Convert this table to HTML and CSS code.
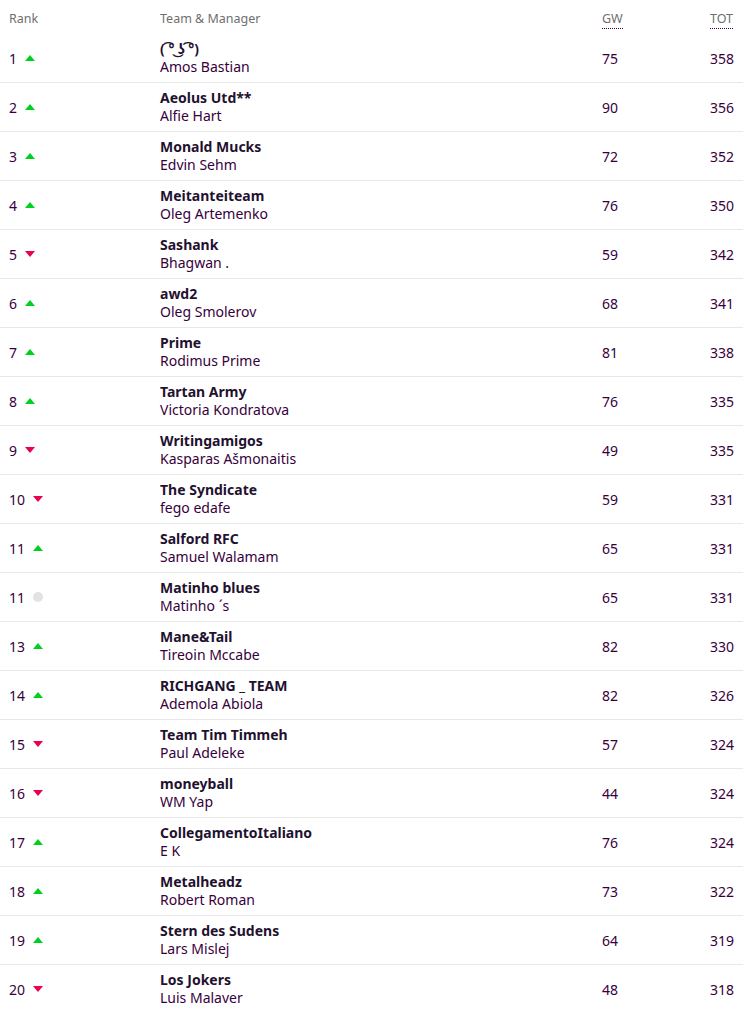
FILE: index.html
```html
<!DOCTYPE html>
<html>
<head>
<meta charset="utf-8">
<link rel="stylesheet" href="styles.css">
</head>
<body>
<div class="table">
  <div class="row head">
    <div class="c-rank">Rank</div>
    <div class="c-team">Team &amp; Manager</div>
    <div class="c-gw"><abbr>GW</abbr></div>
    <div class="c-tot"><abbr>TOT</abbr></div>
  </div>
  <div class="row"><div class="c-rank">1 <span class="up"></span></div><div class="c-team"><div class="tn">( ͡° ͜ʖ ͡°)</div><div class="mn">Amos Bastian</div></div><div class="c-gw">75</div><div class="c-tot">358</div></div>
  <div class="row"><div class="c-rank">2 <span class="up"></span></div><div class="c-team"><div class="tn">Aeolus Utd**</div><div class="mn">Alfie Hart</div></div><div class="c-gw">90</div><div class="c-tot">356</div></div>
  <div class="row"><div class="c-rank">3 <span class="up"></span></div><div class="c-team"><div class="tn">Monald Mucks</div><div class="mn">Edvin Sehm</div></div><div class="c-gw">72</div><div class="c-tot">352</div></div>
  <div class="row"><div class="c-rank">4 <span class="up"></span></div><div class="c-team"><div class="tn">Meitanteiteam</div><div class="mn">Oleg Artemenko</div></div><div class="c-gw">76</div><div class="c-tot">350</div></div>
  <div class="row"><div class="c-rank">5 <span class="down"></span></div><div class="c-team"><div class="tn">Sashank</div><div class="mn">Bhagwan .</div></div><div class="c-gw">59</div><div class="c-tot">342</div></div>
  <div class="row"><div class="c-rank">6 <span class="up"></span></div><div class="c-team"><div class="tn">awd2</div><div class="mn">Oleg Smolerov</div></div><div class="c-gw">68</div><div class="c-tot">341</div></div>
  <div class="row"><div class="c-rank">7 <span class="up"></span></div><div class="c-team"><div class="tn">Prime</div><div class="mn">Rodimus Prime</div></div><div class="c-gw">81</div><div class="c-tot">338</div></div>
  <div class="row"><div class="c-rank">8 <span class="up"></span></div><div class="c-team"><div class="tn">Tartan Army</div><div class="mn">Victoria Kondratova</div></div><div class="c-gw">76</div><div class="c-tot">335</div></div>
  <div class="row"><div class="c-rank">9 <span class="down"></span></div><div class="c-team"><div class="tn">Writingamigos</div><div class="mn">Kasparas Ašmonaitis</div></div><div class="c-gw">49</div><div class="c-tot">335</div></div>
  <div class="row"><div class="c-rank">10 <span class="down"></span></div><div class="c-team"><div class="tn">The Syndicate</div><div class="mn">fego edafe</div></div><div class="c-gw">59</div><div class="c-tot">331</div></div>
  <div class="row"><div class="c-rank">11 <span class="up"></span></div><div class="c-team"><div class="tn">Salford RFC</div><div class="mn">Samuel Walamam</div></div><div class="c-gw">65</div><div class="c-tot">331</div></div>
  <div class="row"><div class="c-rank">11 <span class="same"></span></div><div class="c-team"><div class="tn">Matinho blues</div><div class="mn">Matinho ´s</div></div><div class="c-gw">65</div><div class="c-tot">331</div></div>
  <div class="row"><div class="c-rank">13 <span class="up"></span></div><div class="c-team"><div class="tn">Mane&amp;Tail</div><div class="mn">Tireoin Mccabe</div></div><div class="c-gw">82</div><div class="c-tot">330</div></div>
  <div class="row"><div class="c-rank">14 <span class="up"></span></div><div class="c-team"><div class="tn">RICHGANG _ TEAM</div><div class="mn">Ademola Abiola</div></div><div class="c-gw">82</div><div class="c-tot">326</div></div>
  <div class="row"><div class="c-rank">15 <span class="down"></span></div><div class="c-team"><div class="tn">Team Tim Timmeh</div><div class="mn">Paul Adeleke</div></div><div class="c-gw">57</div><div class="c-tot">324</div></div>
  <div class="row"><div class="c-rank">16 <span class="down"></span></div><div class="c-team"><div class="tn">moneyball</div><div class="mn">WM Yap</div></div><div class="c-gw">44</div><div class="c-tot">324</div></div>
  <div class="row"><div class="c-rank">17 <span class="up"></span></div><div class="c-team"><div class="tn">CollegamentoItaliano</div><div class="mn">E K</div></div><div class="c-gw">76</div><div class="c-tot">324</div></div>
  <div class="row"><div class="c-rank">18 <span class="up"></span></div><div class="c-team"><div class="tn">Metalheadz</div><div class="mn">Robert Roman</div></div><div class="c-gw">73</div><div class="c-tot">322</div></div>
  <div class="row"><div class="c-rank">19 <span class="up"></span></div><div class="c-team"><div class="tn">Stern des Sudens</div><div class="mn">Lars Mislej</div></div><div class="c-gw">64</div><div class="c-tot">319</div></div>
  <div class="row"><div class="c-rank">20 <span class="down"></span></div><div class="c-team"><div class="tn">Los Jokers</div><div class="mn">Luis Malaver</div></div><div class="c-gw">48</div><div class="c-tot">318</div></div>
</div>
</body>
</html>
```
FILE: styles.css
```css
html, body {
  margin: 0;
  padding: 0;
  background: #fff;
}
body {
  font-family: "Noto Sans", "Lato", sans-serif;
  color: #37003c;
  font-size: 14px;
}
.table {
  display: flex;
  flex-direction: column;
}
.row {
  display: grid;
  grid-template-columns: 160px 442px 108px 1fr;
  align-items: center;
  height: 48px;
  border-bottom: 1px solid #e8e8e8;
}
.row.head {
  height: 34px;
  border-bottom: none;
  align-items: start;
  padding-top: 11px;
  box-sizing: border-box;
  font-size: 12.5px;
  line-height: 16px;
  color: #6f6f6f;
}
.head abbr {
  text-decoration: none;
  border-bottom: 1px dotted #37003c;
  padding-bottom: 1px;
}
.c-rank {
  padding-left: 9px;
  display: flex;
  align-items: center;
  gap: 8px;
}
.tn {
  font-weight: 700;
  line-height: 18px;
  color: #1f1230;
}
.mn {
  line-height: 18px;
}
.up, .down {
  display: inline-block;
  width: 0;
  height: 0;
  border-left: 5px solid transparent;
  border-right: 5px solid transparent;
}
.up {
  border-bottom: 6px solid #00d11f;
}
.down {
  border-top: 6px solid #e90052;
}
.same {
  display: inline-block;
  width: 10px;
  height: 10px;
  border-radius: 50%;
  background: #e2e2e2;
}
```
